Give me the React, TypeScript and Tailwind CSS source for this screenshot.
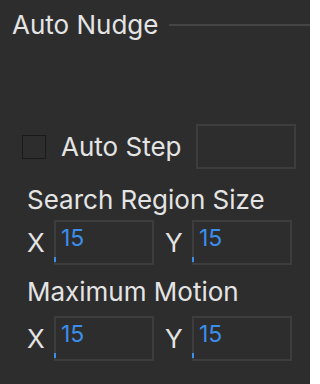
import React from "react";

function NumField({ value }: { value: string }) {
  return (
    <div className="relative h-[45px] w-[100px] border-2 border-[#3d3d3d] pl-[5px] pt-[5px]">
      <span className="block text-[23px] leading-none text-[#3b8eea]">{value}</span>
      <span className="absolute bottom-[1px] left-[-2px] h-[5px] w-[2px] bg-[#3b8eea]" />
    </div>
  );
}

function XYRow({ x, y }: { x: string; y: string }) {
  return (
    <div className="flex items-center">
      <span className="w-[27px] text-[26px]">X</span>
      <NumField value={x} />
      <span className="ml-[11px] w-[27px] text-[26px]">Y</span>
      <NumField value={y} />
    </div>
  );
}

export default function App() {
  return (
    <div className="h-[384px] w-[310px] overflow-hidden bg-[#2d2d2d] font-['Inter',sans-serif] text-[#e4e4e4]">
      <div className="flex items-center gap-[11px] pl-3 pt-[11px]">
        <span className="text-[26px] leading-[28px]">Auto Nudge</span>
        <div className="h-[2px] flex-1 bg-[#454545]" />
      </div>

      <div className="mt-[85px] flex items-center pl-[22px]">
        <div className="h-[24px] w-[24px] border border-[#1a1a1a]" />
        <span className="ml-[15px] text-[26px]">Auto Step</span>
        <div className="ml-[15px] h-[45px] w-[100px] border-2 border-[#3d3d3d]" />
      </div>

      <div className="mt-[16px] pl-[27px]">
        <div className="text-[26px] leading-[30px]">Search Region Size</div>
        <div className="mt-[5px]">
          <XYRow x="15" y="15" />
        </div>
        <div className="mt-[12px] text-[26px] leading-[30px]">Maximum Motion</div>
        <div className="mt-[9px]">
          <XYRow x="15" y="15" />
        </div>
      </div>
    </div>
  );
}
